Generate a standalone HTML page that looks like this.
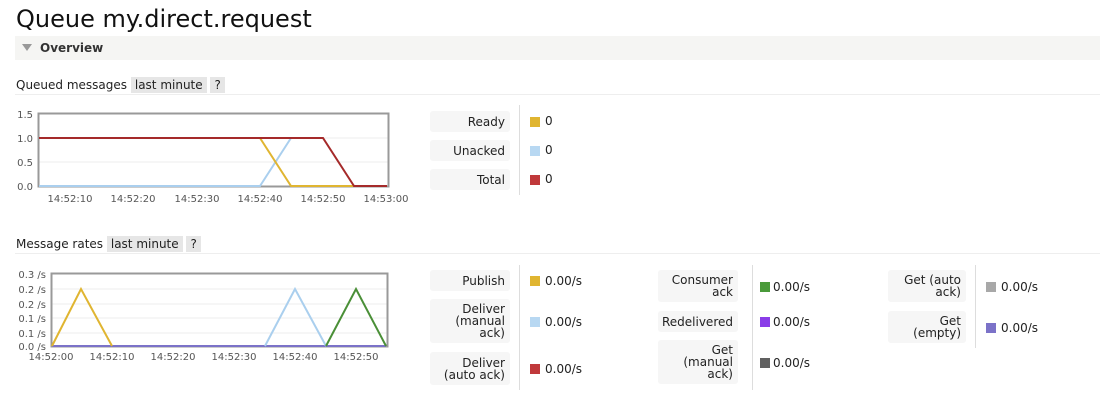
<!DOCTYPE html>
<html><head><meta charset="utf-8"><style>
*{margin:0;padding:0;box-sizing:border-box}
body{width:1100px;height:400px;background:#fff;font-family:"DejaVu Sans","Liberation Sans",sans-serif;color:#222;position:relative;overflow:hidden}
.a{position:absolute;white-space:nowrap}
.lbl{position:absolute;background:#f6f6f6;border-radius:3px;font-size:12px;text-align:right;padding:0 5px;display:flex;align-items:center;justify-content:flex-end;line-height:12px;white-space:pre}
.div{position:absolute;width:1px;background:#ddd}
.sw{position:absolute;width:10px;height:10px}
.v{position:absolute;font-size:12px}
.tag{background:#e6e6e6;padding:1px 4px}
</style></head><body>
<div class="a" style="left:16px;top:5px;font-size:24px;color:#111">Queue my.direct.request</div>
<div class="a" style="left:15px;top:36px;width:1085px;height:24px;background:#f5f5f3"></div>
<div class="a" style="left:22px;top:44px;width:0;height:0;border-left:5px solid transparent;border-right:5px solid transparent;border-top:7px solid #999"></div>
<div class="a" style="left:40px;top:41px;font-size:12px;font-weight:bold;color:#333">Overview</div>

<div class="a" style="left:16px;top:78px;font-size:12px">Queued messages <span class="tag">last minute</span> <span class="tag">?</span></div>
<div class="a" style="left:15px;top:94px;width:1085px;height:1px;background:#eee"></div>
<div class="a" style="left:16px;top:237px;font-size:12px">Message rates <span class="tag">last minute</span> <span class="tag">?</span></div>
<div class="a" style="left:15px;top:253px;width:1085px;height:1px;background:#eee"></div>

<svg class="a" style="left:0;top:100px" width="420" height="110" font-family="DejaVu Sans,sans-serif" font-size="10" fill="#555">
<g stroke="#eee"><line x1="38" y1="38" x2="388" y2="38"/><line x1="38" y1="62" x2="388" y2="62"/></g>
<rect x="38.5" y="13.5" width="350" height="73" fill="none" stroke="#999" stroke-width="2"/>
<text x="33" y="18" text-anchor="end">1.5</text><text x="33" y="42" text-anchor="end">1.0</text><text x="33" y="66" text-anchor="end">0.5</text><text x="33" y="90" text-anchor="end">0.0</text>
<g text-anchor="middle"><text x="70" y="102">14:52:10</text><text x="133" y="102">14:52:20</text><text x="197" y="102">14:52:30</text><text x="260" y="102">14:52:40</text><text x="323" y="102">14:52:50</text><text x="386" y="102">14:53:00</text></g>
<g fill="none" stroke-width="2">
<polyline points="39,86 260,86 291,38" stroke="#aacfee"/>
<polyline points="260,38 291,86 354,86" stroke="#e0b531"/>
<polyline points="39,38 323,38 354,86 387,86" stroke="#a52a2a"/>
</g></svg>

<svg class="a" style="left:0;top:260px" width="420" height="110" font-family="DejaVu Sans,sans-serif" font-size="10" fill="#555">
<g stroke="#eee"><line x1="51" y1="29" x2="387" y2="29"/><line x1="51" y1="44" x2="387" y2="44"/><line x1="51" y1="58" x2="387" y2="58"/><line x1="51" y1="73" x2="387" y2="73"/></g>
<rect x="51.5" y="13.5" width="336" height="73" fill="none" stroke="#999" stroke-width="2"/>
<g text-anchor="end"><text x="46" y="18">0.3 /s</text><text x="46" y="33">0.2 /s</text><text x="46" y="48">0.2 /s</text><text x="46" y="62">0.1 /s</text><text x="46" y="77">0.1 /s</text><text x="46" y="90">0.0 /s</text></g>
<g text-anchor="middle"><text x="51" y="100">14:52:00</text><text x="112" y="100">14:52:10</text><text x="173" y="100">14:52:20</text><text x="234" y="100">14:52:30</text><text x="295" y="100">14:52:40</text><text x="356" y="100">14:52:50</text></g>
<g fill="none" stroke-width="2">
<polyline points="52,86 386,86" stroke="#7b72c8"/>
<polyline points="52,86 81,29 112,86" stroke="#e0b531"/>
<polyline points="265,86 295,29 326,86" stroke="#aacfee"/>
<polyline points="326,86 356,29 386,86" stroke="#4a8f37"/>
</g></svg>

<div class="lbl" style="left:430px;top:111px;width:80px;height:21px">Ready</div>
<div class="lbl" style="left:430px;top:140px;width:80px;height:21px">Unacked</div>
<div class="lbl" style="left:430px;top:169px;width:80px;height:21px">Total</div>
<div class="div" style="left:519px;top:105px;height:90px"></div>
<div class="sw" style="left:530px;top:117px;background:#e0b531"></div><div class="v" style="left:545px;top:114px">0</div>
<div class="sw" style="left:530px;top:146px;background:#b8d8f2"></div><div class="v" style="left:545px;top:143px">0</div>
<div class="sw" style="left:530px;top:175px;background:#c0393b"></div><div class="v" style="left:545px;top:172px">0</div>

<div class="lbl" style="left:430px;top:270px;width:80px;height:21px">Publish</div>
<div class="lbl" style="left:430px;top:299px;width:80px;height:44px">Deliver
(manual
ack)</div>
<div class="lbl" style="left:430px;top:352px;width:80px;height:33px">Deliver
(auto ack)</div>
<div class="div" style="left:519px;top:265px;height:125px"></div>
<div class="sw" style="left:530px;top:276px;background:#e0b531"></div><div class="v" style="left:545px;top:274px">0.00/s</div>
<div class="sw" style="left:530px;top:317px;background:#b8d8f2"></div><div class="v" style="left:545px;top:315px">0.00/s</div>
<div class="sw" style="left:530px;top:364px;background:#c0393b"></div><div class="v" style="left:545px;top:362px">0.00/s</div>

<div class="lbl" style="left:658px;top:270px;width:80px;height:32px">Consumer
ack</div>
<div class="lbl" style="left:658px;top:311px;width:80px;height:21px">Redelivered</div>
<div class="lbl" style="left:658px;top:340px;width:80px;height:44px">Get
(manual
ack)</div>
<div class="div" style="left:752px;top:265px;height:125px"></div>
<div class="sw" style="left:760px;top:282px;background:#4a9a3a"></div><div class="v" style="left:773px;top:280px">0.00/s</div>
<div class="sw" style="left:760px;top:317px;background:#8a3de8"></div><div class="v" style="left:773px;top:315px">0.00/s</div>
<div class="sw" style="left:760px;top:358px;background:#606060"></div><div class="v" style="left:773px;top:356px">0.00/s</div>

<div class="lbl" style="left:888px;top:270px;width:78px;height:32px">Get (auto
ack)</div>
<div class="lbl" style="left:888px;top:311px;width:78px;height:32px">Get
(empty)</div>
<div class="div" style="left:975px;top:265px;height:83px"></div>
<div class="sw" style="left:986px;top:282px;background:#a8a8a8"></div><div class="v" style="left:1001px;top:280px">0.00/s</div>
<div class="sw" style="left:986px;top:323px;background:#7b72c8"></div><div class="v" style="left:1001px;top:321px">0.00/s</div>
</body></html>
